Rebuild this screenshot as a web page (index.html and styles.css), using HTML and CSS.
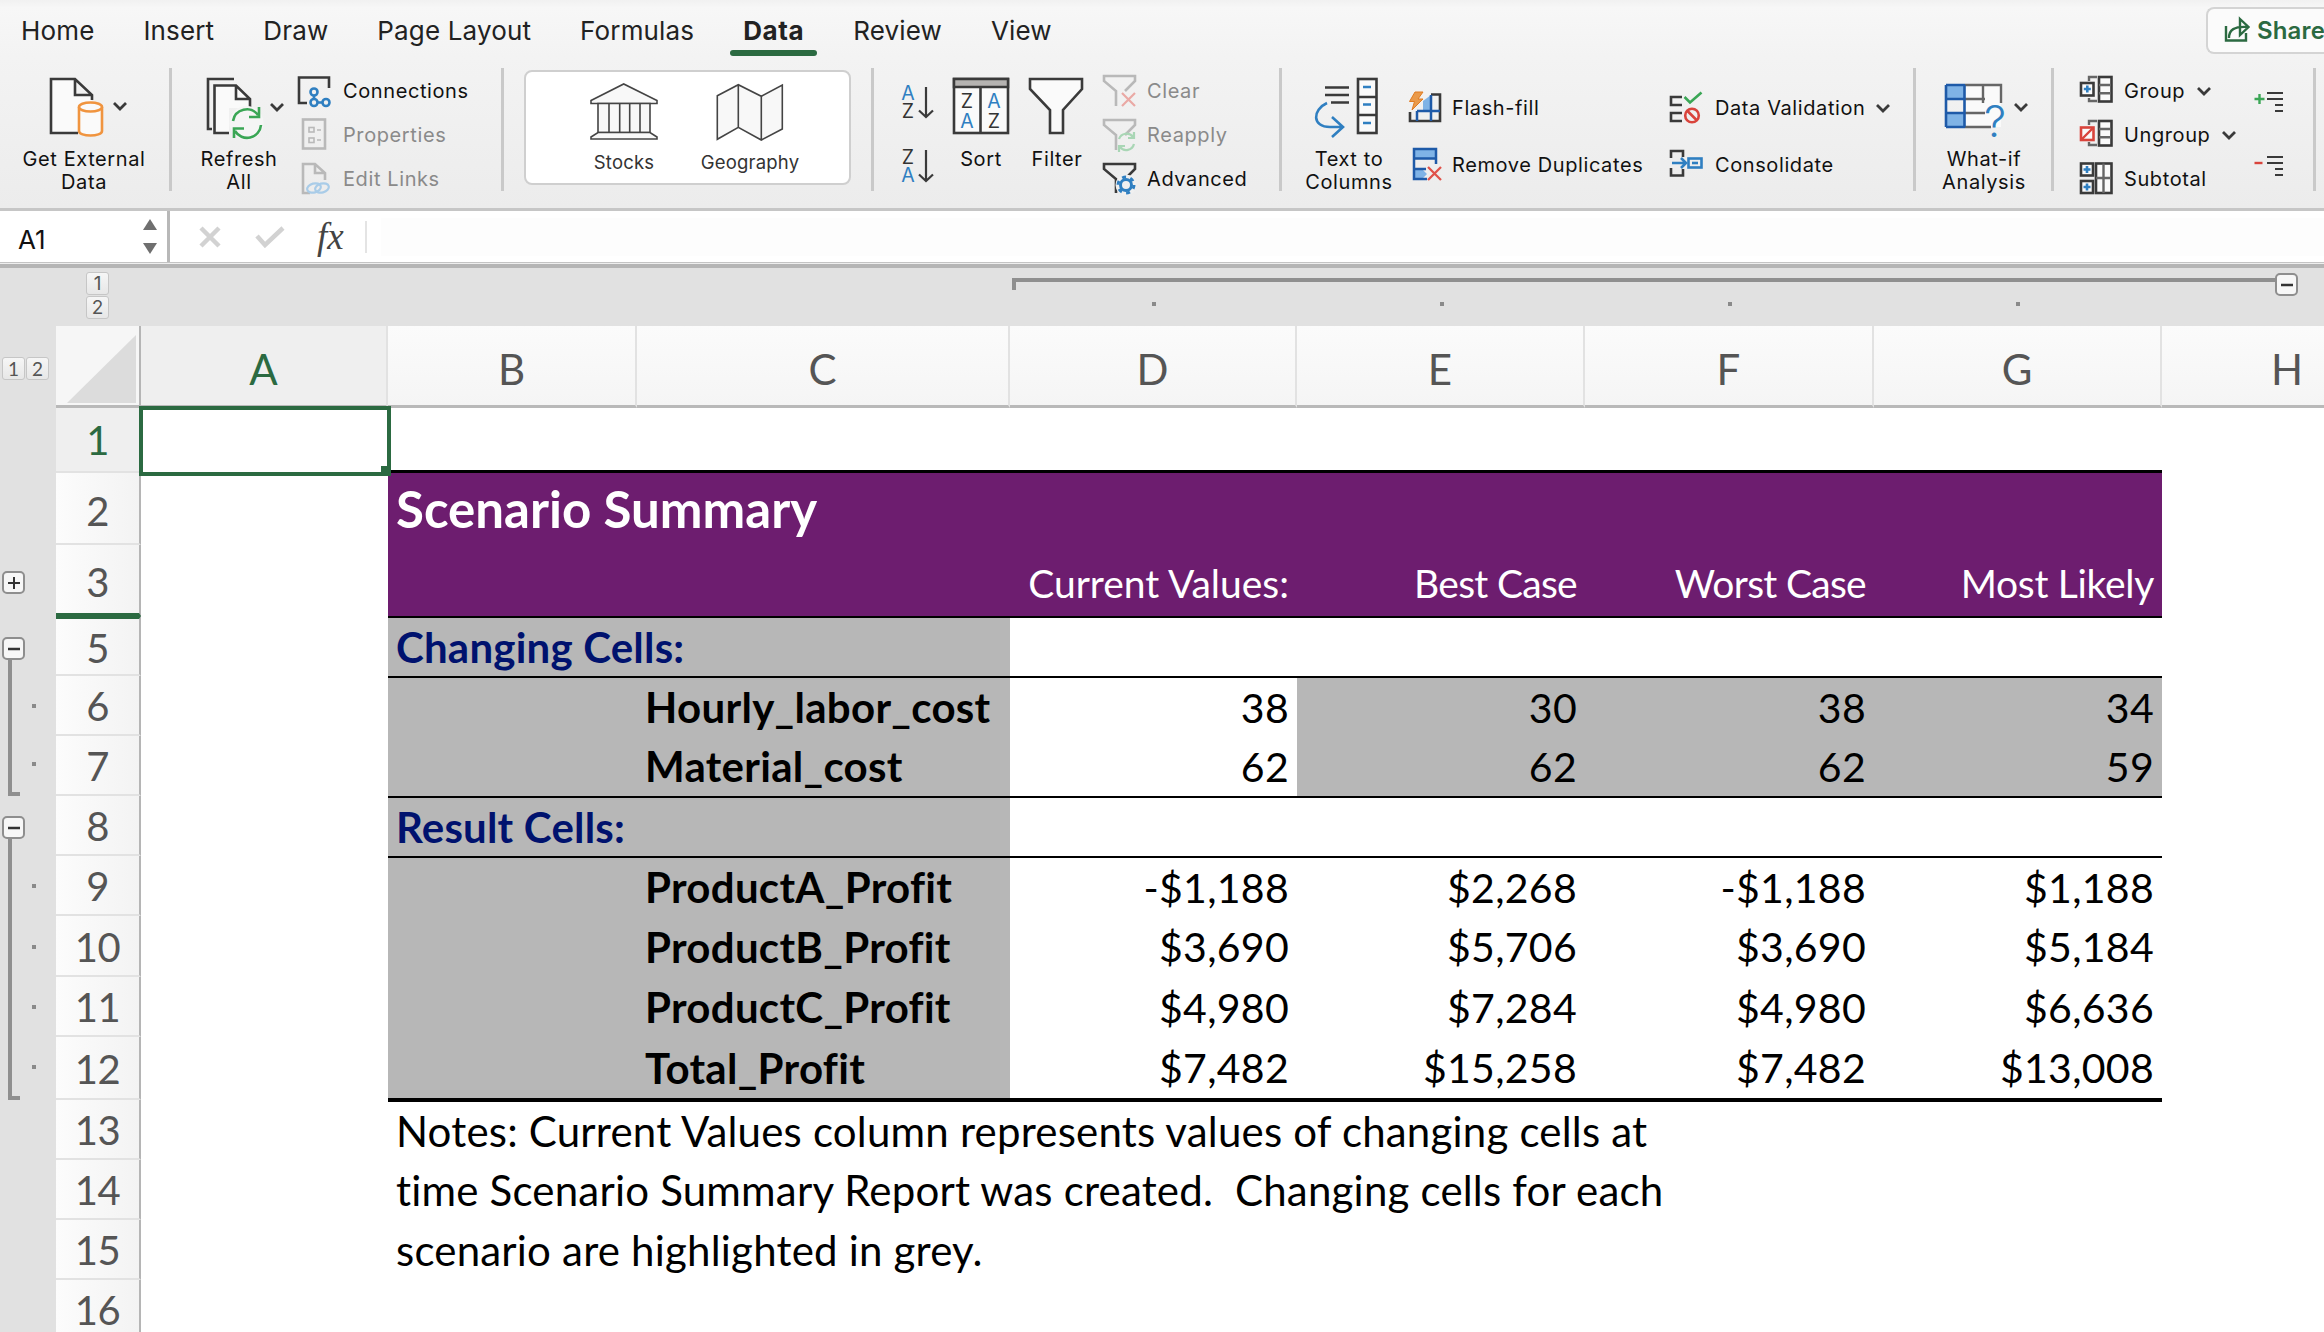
FILE: index.html
```html
<!DOCTYPE html>
<html lang="en">
<head>
<meta charset="utf-8">
<title>Scenario Summary</title>
<link rel="stylesheet" href="styles.css">
</head>
<body>
<div class="app">
  <nav class="tabs">
    <span class="tab">Home</span><span class="tab">Insert</span><span class="tab">Draw</span><span class="tab">Page Layout</span><span class="tab">Formulas</span><span class="tab active">Data</span><span class="tab">Review</span><span class="tab">View</span>
    <div class="share">
      <svg class="share-icon" viewBox="2220 18 30 30"><path class="st-green" d="M2224 29 V43.5 H2244 V36"/><path class="st-green" d="M2227 41 C2227 33 2232 29 2246 30 M2238 22 L2246.5 30 L2238 38 Z"/></svg>
      <span>Share</span>
    </div>
  </nav>

  <section class="ribbon">
    <div class="group g1">
      <div class="big w168">
        <svg class="bi" width="104" height="68" viewBox="32 72 104 68"><path class="st" d="M78 133 H51 V79 H75 L92 95 V100 M75 79 V95 H92" fill="#fafafa"/><path d="M79 107 V131 C79 137 102 137 102 131 V107" fill="#fafafa" stroke="#f0943f" stroke-width="2.6"/><ellipse cx="90.5" cy="107" rx="11.5" ry="4.5" fill="#fafafa" stroke="#f0943f" stroke-width="2.6"/><path class="chev" d="M114 103 L120 109 L126 103"/></svg>
        <span class="lbl">Get External<br>Data</span>
      </div>
    </div>

    <div class="group g2">
      <div class="big w130">
        <svg class="bi" width="130" height="68" viewBox="173 72 130 68"><path class="st" d="M233 79 H207 V129 H211"/><path fill="#fafafa" d="M228 133 H213.5 V85.5 H235 L249 99 V108 H228 Z"/><path class="st" d="M228 133 H213.5 V85.5 H235 L249 99 V108 M235 86 V99 H249"/><circle cx="245.5" cy="123" r="17" fill="#f5f5f5"/><path class="st-g" d="M232 121 A14 14 0 0 1 257 115 M258 107 V117 H248 M260 125 A14 14 0 0 1 234 131 M233 138 V128.500 H243"/><path class="chev" d="M270 104 L276 110 L282 104"/></svg>
        <span class="lbl">Refresh<br>All</span>
      </div>
      <div class="rows">
        <div class="row"><svg width="40" height="40" viewBox="296 71 40 40"><path class="st" d="M307 103 H299 V77.500 H329 V88"/><circle cx="314" cy="92" r="3.500" class="st-b"/><circle cx="314" cy="102.500" r="3.500" class="st-b"/><circle cx="326" cy="102.500" r="3.500" class="st-b"/><path class="st-b" d="M314 95.500 V99 M317.500 102.500 H322.500"/></svg><span>Connections</span></div>
        <div class="row off"><svg width="40" height="40" viewBox="296 115 40 40"><rect x="303" y="119.500" width="22" height="29" class="st-o"/><rect x="309" y="127.500" width="5" height="4.500" class="st-thin"/><rect x="309" y="138" width="5" height="4.500" class="st-thin"/><path class="st-thin" d="M317 130 H321 M317 140 H321"/></svg><span>Properties</span></div>
        <div class="row off"><svg width="40" height="40" viewBox="296 159 40 40"><path class="st-o" d="M310 193 H303 V164 H315 L325 173 V180 M315 164 V173 H325"/><ellipse cx="314" cy="188" rx="7" ry="4.500" transform="rotate(-15 314 188)" fill="none" stroke="#a9cce8" stroke-width="2.200"/><ellipse cx="322" cy="188" rx="7" ry="4.500" transform="rotate(-15 322 188)" fill="none" stroke="#a9cce8" stroke-width="2.200"/></svg><span>Edit Links</span></div>
      </div>
    </div>

    <div class="group g3">
      <div class="types">
        <div class="type">
          <svg width="74" height="64" viewBox="586 80 74 64"><path class="st-t" fill="#f8f8f8" d="M590 100.500 L622.700 84 L656 100.500 V103.500 H590 Z"/><path class="st-t" fill="#f8f8f8" d="M597 103.500 H649 V132.500 H597 Z M608 103.500 V132.500 M618.700 103.500 V132.500 M628.700 103.500 V132.500 M639 103.500 V132.500"/><path class="st-t" fill="#f8f8f8" d="M597 132.500 H649 L656 137 V139 H590 V137 Z"/></svg>
          <span>Stocks</span>
        </div>
        <div class="type">
          <svg width="74" height="64" viewBox="712 80 74 64"><path class="st-t" fill="#f8f8f8" d="M716.300 95.700 L737.300 84.700 L760.300 96.300 L781.300 85 V129 L760.300 140 L737.300 127.300 L716.300 139.300 Z M737.300 84.700 V127.300 M760.300 96.300 V140"/></svg>
          <span>Geography</span>
        </div>
      </div>
    </div>

    <div class="group g4">
      <div class="sorts">
        <svg width="40" height="40" viewBox="897 82 40 40"><text class="ltr blue" x="908" y="100">A</text><text class="ltr dark" x="908" y="118">Z</text><path class="st-a" d="M926 87 V117 M919 110.500 L926 117 L933 110.500"/></svg>
        <svg width="40" height="40" viewBox="897 146 40 40"><text class="ltr dark" x="908" y="164">Z</text><text class="ltr blue" x="908" y="182">A</text><path class="st-a" d="M926 150 V181 M919 174.500 L926 181 L933 174.500"/></svg>
      </div>
      <div class="big w64 ml-sort">
        <svg class="bi" width="64" height="68" viewBox="949 72 64 68"><rect x="954" y="79" width="54" height="54" class="st" fill="#fafafa"/><rect x="954" y="79" width="54" height="8" fill="#b5b3b1" stroke="#3a3a3a" stroke-width="2.500"/><path class="st" d="M980.500 87 V133"/><text class="ltr dark" x="967" y="107.500">Z</text><text class="ltr blue" x="967" y="128">A</text><text class="ltr blue" x="994" y="107.500">A</text><text class="ltr dark" x="994" y="128">Z</text></svg>
        <span class="lbl">Sort</span>
      </div>
      <div class="big w64 ml-filter">
        <svg class="bi" width="64" height="68" viewBox="1025 72 64 68"><path class="st" fill="#fafafa" d="M1030 79 H1082 V89 L1063 110 V133 H1050 V110 L1030 89 Z"/></svg>
        <span class="lbl">Filter</span>
      </div>
      <div class="rows ml-clear">
        <div class="row off"><svg width="40" height="40" viewBox="1100 71 40 40"><path class="st-o" d="M1116 106 V91 L1104 81 V76 H1135 V81 L1125 91"/><path d="M1122 93 L1135 106 M1135 93 L1122 106" stroke="#eaa9a5" stroke-width="2.200" fill="none"/></svg><span>Clear</span></div>
        <div class="row off"><svg width="40" height="40" viewBox="1100 115 40 40"><path class="st-o" d="M1116 150 V135 L1104 125 V120 H1135 V125 L1125 135"/><path d="M1119 139 A8 8 0 0 1 1133 137 M1134 132 V138 H1128 M1134 144 A8 8 0 0 1 1120 147 M1119 152 V146 H1125" stroke="#a9d6b5" stroke-width="2.200" fill="none"/></svg><span>Reapply</span></div>
        <div class="row"><svg width="40" height="40" viewBox="1100 159 40 40"><path class="st" d="M1116 193 V179 L1104 169 V164 H1135 V169 L1125 179"/><circle cx="1126" cy="185" r="10.500" fill="#f0f0f0"/><circle cx="1126" cy="185" r="5.500" fill="none" stroke="#2f7fc1" stroke-width="3"/><circle cx="1126" cy="185" r="8" fill="none" stroke="#2f7fc1" stroke-width="3" stroke-dasharray="4 4.380"/></svg><span>Advanced</span></div>
      </div>
    </div>

    <div class="group g5">
      <div class="big w96 ml-ttc">
        <svg class="bi" width="80" height="68" viewBox="1309 72 80 68"><path class="st" d="M1325 87.500 H1349 M1325 95 H1349 M1331 102.500 H1349"/><rect x="1358" y="79" width="18.500" height="54" class="st" fill="#fafafa"/><path class="st" d="M1358 97 H1376 M1358 115 H1376"/><path class="st-b" d="M1363 87 H1371 M1363 104.500 H1371 M1363 123 H1371 M1327 103 C1312 110 1312 127 1330 127 H1342 M1332 117 L1343 127 L1332 137"/></svg>
        <span class="lbl">Text to<br>Columns</span>
      </div>
      <div class="pairs ml-pair1">
        <div class="row"><svg width="40" height="40" viewBox="1405 88 40 40"><path fill="#7fb3e6" d="M1423 101 L1431 95 V110 H1423 Z"/><path class="st" d="M1431 94.500 H1440 V121 H1410 V112"/><path d="M1431 95 V121 M1417 111 V121 M1417 111 H1440" stroke="#1e5aa8" stroke-width="2.500" fill="none"/><path fill="#ea9a4a" stroke="#e07b20" stroke-width="1" d="M1415 92 H1423 L1418 99 H1423 L1412 110 L1414.500 101.500 H1409.500 Z"/></svg><span>Flash-fill</span></div>
        <div class="row"><svg width="40" height="40" viewBox="1405 145 40 40"><path fill="#7fb3e6" d="M1414 149 H1436 V158 H1414 Z M1414 169 H1422 L1427 174 L1422 179 H1414 Z"/><path d="M1427 179 H1414 V149 H1436 V164 M1414 158.500 H1436 M1414 169 H1426" fill="none" stroke="#1e5aa8" stroke-width="2.500"/><path d="M1428 167 L1441 180 M1441 167 L1428 180" stroke="#e0524a" stroke-width="2.300" fill="none"/></svg><span>Remove Duplicates</span></div>
      </div>
      <div class="pairs ml-pair2">
        <div class="row"><svg width="40" height="40" viewBox="1666 88 40 40"><path class="st" d="M1682 97 H1671 V105 H1682 M1682 113 H1671 V121 H1682"/><path class="st-g" d="M1684.500 97 L1690 102.500 L1701.500 92.500"/><circle cx="1692" cy="115.500" r="6.800" fill="#f0f0f0" stroke="#d9443c" stroke-width="2.600"/><path d="M1687.500 111 L1696.500 120" stroke="#d9443c" stroke-width="2.600"/></svg><span>Data Validation</span><svg class="cv cv-dv" width="14" height="10" viewBox="0 0 14 10"><path class="chev" d="M1 2 L7 8 L13 2"/></svg></div>
        <div class="row"><svg width="40" height="40" viewBox="1666 145 40 40"><path class="st" d="M1683 157 V151 H1671 V158 M1671 168 V175.500 H1683 V169"/><path class="st-b" d="M1672 163 H1686 M1681 158 L1686 163 L1681 168"/><rect x="1688.500" y="158.500" width="13" height="9" class="st-b"/><path class="st-b" d="M1692 163 H1698"/></svg><span>Consolidate</span></div>
      </div>
    </div>

    <div class="group g6">
      <div class="big w88 ml-what">
        <svg class="bi" width="88" height="68" viewBox="1939 72 88 68"><rect x="1945" y="85" width="19" height="14" fill="#7fb3e6"/><rect x="1945" y="113" width="19" height="14" fill="#7fb3e6"/><rect x="1964" y="85" width="36" height="42" fill="#fafafa"/><path class="st-m" d="M1964 85 H2000 V103 M1964 99 H1984 M1964 113 H1984 M1982 85 V103 M1964 127 H1990"/><path d="M1963.500 85 V127 M1945 99 H1964 M1945 113 H1964 M1945 85 H1964 M1945 127 H1964 M1945 85 V127" fill="none" stroke="#1e5aa8" stroke-width="2.600"/><text class="qm" x="1994" y="137">?</text><path class="chev" d="M2014 104 L2020 110 L2026 104"/></svg>
        <span class="lbl">What-if<br>Analysis</span>
      </div>
    </div>

    <div class="group g7">
      <div class="rows">
        <div class="row row-o"><svg width="40" height="40" viewBox="2076 71 40 40"><rect x="2081" y="83" width="12.500" height="12.500" class="st" fill="#fafafa"/><path class="st-b" d="M2087.300 85.500 V92.500 M2083.800 89 H2090.800"/><path class="st-m" d="M2097 77 H2089 V81 M2097 101 H2089 V98"/><rect x="2099" y="77" width="12.500" height="24.500" class="st" fill="#fafafa"/><path class="st-m" d="M2099 85 H2111 M2099 93.300 H2111"/></svg><span>Group</span><svg class="cv" width="14" height="10" viewBox="0 0 14 10"><path class="chev" d="M1 2 L7 8 L13 2"/></svg></div>
        <div class="row row-o"><svg width="40" height="40" viewBox="2076 115 40 40"><rect x="2081" y="127.500" width="12.500" height="12.500" fill="#fafafa" stroke="#d9443c" stroke-width="2.600"/><path d="M2082 139 L2093 128" stroke="#d9443c" stroke-width="2.400"/><path class="st-m" d="M2097 121 H2089 V125 M2097 145 H2089 V142"/><rect x="2099" y="121" width="12.500" height="24.500" class="st" fill="#fafafa"/><path class="st-m" d="M2099 129 H2111 M2099 137.300 H2111"/></svg><span>Ungroup</span><svg class="cv" width="14" height="10" viewBox="0 0 14 10"><path class="chev" d="M1 2 L7 8 L13 2"/></svg></div>
        <div class="row row-o"><svg width="40" height="40" viewBox="2076 159 40 40"><rect x="2081" y="163.500" width="12" height="12" class="st" fill="#fafafa"/><rect x="2081" y="181" width="12" height="12" class="st" fill="#fafafa"/><path class="st-b" d="M2087 166 V173 M2083.500 169.500 H2090.500 M2087 183.500 V190.500 M2083.500 187 H2090.500"/><rect x="2096" y="163.500" width="15.500" height="29.500" class="st" fill="#fafafa"/><path class="st-m" d="M2103.500 163.500 V193 M2096 178 H2111"/></svg><span>Subtotal</span></div>
      </div>
      <div class="indents">
        <svg width="40" height="40" viewBox="2250 88 40 40"><path d="M2254.500 99 H2264.500 M2259.500 94 V104" stroke="#3aa655" stroke-width="2.400" fill="none"/><path class="st-i" d="M2267 93 H2283 M2267 99 H2283 M2275 105 H2283 M2275 111 H2283"/></svg>
        <svg width="40" height="40" viewBox="2250 152 40 40"><path d="M2254.500 163 H2262.500" stroke="#d9443c" stroke-width="2.400" fill="none"/><path class="st-i" d="M2267 157 H2283 M2267 163 H2283 M2275 169 H2283 M2275 175 H2283"/></svg>
      </div>
    </div>
  </section>

  <section class="fbar">
    <div class="namebox">
      <span class="nametext">A1</span>
      <svg width="16" height="36" viewBox="0 0 16 36"><path d="M8 0 L15 11 H1 Z" fill="#6f6f6f"/><path d="M8 35 L15 24 H1 Z" fill="#6f6f6f"/></svg>
    </div>
    <div class="fbtns">
      <svg width="22" height="22" viewBox="0 0 22 22"><path d="M2 2 L20 20 M20 2 L2 20" stroke="#d2d2d2" stroke-width="4.500" fill="none"/></svg>
      <svg width="30" height="22" viewBox="0 0 30 22"><path d="M2 10 L10 19 L28 2" stroke="#d2d2d2" stroke-width="4.500" fill="none"/></svg>
      <span class="fx">fx</span>
    </div>
    <div class="finput"></div>
  </section>
  <div class="fline"></div>

  <div class="coltop">
    <div class="lvls-col">
      <span class="lvl">1</span><span class="lvl">2</span>
    </div>
    <div class="colgroup">
      <div class="cg-bar"></div>
      <span class="obtn top-minus"><svg width="14" height="4" viewBox="0 0 14 4"><path d="M1 2 H13" stroke="#333" stroke-width="2.500"/></svg></span>
      <div class="cg-dots"><i class="dot d1"></i><i class="dot d2"></i><i class="dot d3"></i><i class="dot d4"></i></div>
    </div>
  </div>

  <main class="sheet">
    <!-- header -->
    <div class="gut lvl-row"><span class="lvl">1</span><span class="lvl">2</span></div>
    <div class="corner"><svg width="72" height="70" viewBox="0 0 72 70"><path d="M1 69 L70 1 V69 Z" fill="#dcdcdc"/></svg></div>
    <div class="ch sel">A</div><div class="ch">B</div><div class="ch">C</div><div class="ch">D</div><div class="ch">E</div><div class="ch">F</div><div class="ch">G</div><div class="ch">H</div>

    <!-- row 1 -->
    <div class="gut"></div><div class="rh rh-sel">1</div>
    <div class="c cur"><i class="handle"></i></div>
    <div class="c tb"></div><div class="c tb"></div><div class="c tb"></div><div class="c tb"></div><div class="c tb"></div><div class="c tb"></div>

    <!-- row 2 -->
    <div class="gut"></div><div class="rh rh-tall">2</div><div class="c"></div>
    <div class="c purple title span6">Scenario Summary</div>

    <!-- row 3 -->
    <div class="gut gut-plus"><span class="obtn"><svg width="14" height="14" viewBox="0 0 14 14"><path d="M1 7 H13 M7 1 V13" stroke="#333" stroke-width="2"/></svg></span></div><div class="rh rh-tall rh-hid">3</div><div class="c"></div>
    <div class="c purple span2"></div>
    <div class="c purple hd hd-wide">Current Values:</div><div class="c purple hd">Best Case</div><div class="c purple hd">Worst Case</div><div class="c purple hd hd-mid">Most Likely</div>

    <!-- row 5 -->
    <div class="gut gut-minus"><span class="obtn"><svg width="14" height="4" viewBox="0 0 14 4"><path d="M1 2 H13" stroke="#333" stroke-width="2.500"/></svg></span><i class="vline"></i></div><div class="rh rh-after">5</div><div class="c"></div>
    <div class="c grey section span2 bt">Changing Cells:</div>
    <div class="c bt"></div><div class="c bt"></div><div class="c bt"></div><div class="c bt"></div>

    <!-- row 6 -->
    <div class="gut gut-line"><i class="dot"></i></div><div class="rh">6</div><div class="c"></div>
    <div class="c grey bt"></div><div class="c grey name bt">Hourly_labor_cost</div>
    <div class="c num bt">38</div><div class="c grey num bt">30</div><div class="c grey num bt">38</div><div class="c grey num bt">34</div>

    <!-- row 7 -->
    <div class="gut gut-line gut-end"><i class="dot"></i></div><div class="rh">7</div><div class="c"></div>
    <div class="c grey"></div><div class="c grey name">Material_cost</div>
    <div class="c num">62</div><div class="c grey num">62</div><div class="c grey num">62</div><div class="c grey num">59</div>

    <!-- row 8 -->
    <div class="gut gut-minus gut-minus8"><span class="obtn"><svg width="14" height="4" viewBox="0 0 14 4"><path d="M1 2 H13" stroke="#333" stroke-width="2.500"/></svg></span><i class="vline"></i></div><div class="rh">8</div><div class="c"></div>
    <div class="c grey section span2 bt">Result Cells:</div>
    <div class="c bt"></div><div class="c bt"></div><div class="c bt"></div><div class="c bt"></div>

    <!-- row 9 -->
    <div class="gut gut-line"><i class="dot"></i></div><div class="rh">9</div><div class="c"></div>
    <div class="c grey bt"></div><div class="c grey name bt">ProductA_Profit</div>
    <div class="c num bt">-$1,188</div><div class="c num bt">$2,268</div><div class="c num bt">-$1,188</div><div class="c num bt">$1,188</div>

    <!-- row 10 -->
    <div class="gut gut-line"><i class="dot"></i></div><div class="rh">10</div><div class="c"></div>
    <div class="c grey"></div><div class="c grey name">ProductB_Profit</div>
    <div class="c num">$3,690</div><div class="c num">$5,706</div><div class="c num">$3,690</div><div class="c num">$5,184</div>

    <!-- row 11 -->
    <div class="gut gut-line"><i class="dot"></i></div><div class="rh">11</div><div class="c"></div>
    <div class="c grey"></div><div class="c grey name">ProductC_Profit</div>
    <div class="c num">$4,980</div><div class="c num">$7,284</div><div class="c num">$4,980</div><div class="c num">$6,636</div>

    <!-- row 12 -->
    <div class="gut gut-line gut-end"><i class="dot"></i></div><div class="rh">12</div><div class="c"></div>
    <div class="c grey bb"></div><div class="c grey name bb">Total_Profit</div>
    <div class="c num bb">$7,482</div><div class="c num bb">$15,258</div><div class="c num bb">$7,482</div><div class="c num bb">$13,008</div>

    <!-- notes -->
    <div class="gut"></div><div class="rh">13</div><div class="c"></div>
    <div class="c note span6 bt">Notes: Current Values column represents values of changing cells at</div>
    <div class="gut"></div><div class="rh">14</div><div class="c"></div>
    <div class="c note span6">time Scenario Summary Report was created.&nbsp; Changing cells for each</div>
    <div class="gut"></div><div class="rh">15</div><div class="c"></div>
    <div class="c note span6">scenario are highlighted in grey.</div>
    <div class="gut"></div><div class="rh">16</div>
  </main>
</div>
</body>
</html>
```
FILE: styles.css
```css
* { box-sizing: border-box; }
html, body { margin: 0; padding: 0; width: 2324px; height: 1332px; overflow: hidden; background: #fff; }
body { font-family: Inter, "Liberation Sans", sans-serif; color: #111; }
svg { display: block; flex-shrink: 0; }

.app { width: 2324px; height: 1332px; display: flex; flex-direction: column; overflow: hidden; }

/* tabs */
.tabs {
  height: 56px; display: flex; align-items: center; gap: 49px; padding-left: 21px; flex-shrink: 0;
  background: linear-gradient(#f1f1f1, #f7f7f7 14%, #f3f3f3);
  font-size: 26px; color: #222; letter-spacing: .15px;
}
.tab { position: relative; height: 56px; line-height: 61px; white-space: nowrap; }
.tab.active { font-weight: 700; letter-spacing: .6px; }
.tab.active::after {
  content: ""; position: absolute; left: -13px; right: -13px; bottom: 0; height: 6px;
  border-radius: 3px; background: #2b6a41;
}
.share {
  margin-left: auto; margin-top: 4px; width: 118px; height: 47px; display: flex; align-items: center; gap: 5px; padding-left: 14px;
  background: #fbfbfb; border: 2px solid #d4d4d4; border-right: 0; border-radius: 8px 0 0 8px;
  color: #2b6a41; font-weight: 600; font-size: 24px; white-space: nowrap; overflow: hidden;
}
.share-icon { width: 30px; height: 30px; }
.st-green { fill: none; stroke: #2b6a41; stroke-width: 2.4; }

/* ribbon */
.ribbon {
  height: 155px; display: flex; padding-top: 12px; flex-shrink: 0;
  background: linear-gradient(#f3f3f3, #ececec);
  border-bottom: 3px solid #c6c6c6;
}
.group { height: 123px; border-right: 3px solid #c9c9c9; display: flex; flex-shrink: 0; }
.g1 { width: 172px; }
.g2 { width: 332px; }
.g3 { width: 370px; }
.g4 { width: 408px; }
.g5 { width: 634px; }
.g6 { width: 138px; }
.g7 { width: 262px; }

.big { display: flex; flex-direction: column; align-items: center; padding-top: 4px; font-size: 20px; flex-shrink: 0; }
.bi { margin-bottom: 8px; overflow: visible; }
.lbl { text-align: center; line-height: 23px; white-space: nowrap; letter-spacing: .6px; }
.w168 { width: 168px; }
.w130 { width: 130px; }
.w64 { width: 64px; }
.w96 { width: 96px; }
.w88 { width: 88px; }

.rows { display: flex; flex-direction: column; padding-top: 1px; flex-shrink: 0; }
.row { height: 44px; display: flex; align-items: center; gap: 7px; font-size: 20px; white-space: nowrap; letter-spacing: .6px; flex-shrink: 0; }
.row.off { color: #8a8a8a; }
.row-o { gap: 8px; }
.cv { margin-left: 4px; }
.cv-dv { margin-left: 1px; }
.g2 .big { margin: 0 -8px 0 2px; }

/* data types */
.types {
  margin: 2px 0 0 20px; width: 327px; height: 115px; display: flex; padding: 8px 0 0 35px;
  background: #fff; border: 2px solid #cfcfcf; border-radius: 8px;
}
.type { width: 126px; display: flex; flex-direction: column; align-items: center; gap: 6px; font-size: 18.500px; color: #333; line-height: 24px; letter-spacing: .2px; }

/* sort & filter */
.sorts { display: flex; flex-direction: column; gap: 24px; padding: 14px 0 0 23px; width: 64px; flex-shrink: 0; }
.ml-sort { margin-left: 11px; }
.ml-filter { margin-left: 12px; }
.ml-clear { margin-left: 11px; }
.ltr { font-family: Inter, sans-serif; font-size: 19.500px; text-anchor: middle; }
.blue { fill: #2f7fc1; }
.dark { fill: #333; }
.st-a { fill: none; stroke: #3a3a3a; stroke-width: 2.2; }
.st { stroke: #3a3a3a; stroke-width: 2.6; fill: none; }
.st[fill] { fill: #fafafa; }
.st-g { stroke: #3aa655; stroke-width: 2.6; fill: none; }
.st-b { stroke: #2f7fc1; stroke-width: 2.6; fill: none; }
.st-o { stroke: #b9b9b9; stroke-width: 2.6; fill: none; }
.st-thin { stroke: #b9b9b9; stroke-width: 1.6; fill: none; }
.st-t { stroke: #444; stroke-width: 1.6; }
.st-m { stroke: #666; stroke-width: 2.4; fill: none; }
.st-i { stroke: #3a3a3a; stroke-width: 2.2; fill: none; }
.chev { fill: none; stroke: #3a3a3a; stroke-width: 2.8; }
.qm { font-family: Inter, sans-serif; font-size: 44px; font-weight: 300; text-anchor: middle; fill: #2f7fc1; }

/* data tools */
.ml-ttc { margin-left: 19px; }
.pairs { display: flex; flex-direction: column; padding-top: 18px; gap: 13px; flex-shrink: 0; }
.ml-pair1 { margin-left: 8px; width: 261px; }
.ml-pair2 .row { gap: 9px; }
.ml-what { margin-left: 24px; }

/* outline */
.g7 .rows { margin-left: 22px; }
.indents { margin-left: auto; margin-right: 23px; display: flex; flex-direction: column; gap: 24px; padding-top: 20px; }

/* formula bar */
.fbar { height: 51px; display: flex; background: #fff; flex-shrink: 0; }
.namebox {
  width: 170px; display: flex; align-items: center; justify-content: space-between;
  padding: 0 9px 0 18px; font-size: 26px; color: #111; border-right: 3px solid #b8b8b8;
}
.nametext { padding-top: 5px; }
.fbtns { width: 197px; display: flex; align-items: center; padding-left: 29px; gap: 34px; height: 32px; margin-top: 10px; border-right: 2px solid #e4e4e4; }
.fx { font-family: "Liberation Serif", serif; font-style: italic; font-size: 37px; color: #444; line-height: 32px; margin-left: -2px; }
.finput { flex: 1; margin: 7px 0 0 14px; height: 38px; background: #fdfdfd; }
.fline { height: 6px; flex-shrink: 0; background: linear-gradient(#c4c4c4 0 1px, #eeeeee 1px 2px, #b5b5b5 2px 100%); }

/* column outline */
.coltop { height: 58px; flex-shrink: 0; background: #e1e1e1; display: flex; }
.lvls-col { width: 86px; margin-left: 86px; padding-top: 4px; display: flex; flex-direction: column; gap: 1px; flex-shrink: 0; }
.lvl {
  width: 23px; height: 23px; display: flex; align-items: center; justify-content: center; flex-shrink: 0;
  background: linear-gradient(#f6f6f6, #e7e7e7); border: 1px solid #c6c6c6; border-radius: 3px;
  font-size: 19px; color: #555;
}
.colgroup { position: relative; flex: 1; margin-left: 840px; }
.cg-bar { margin-top: 10px; width: 1264px; height: 12px; border-top: 4px solid #8f8f8f; border-left: 4px solid #8f8f8f; }
.top-minus { position: absolute; left: 1263px; top: 5px; }
.cg-dots { position: relative; }
.cg-dots .dot { position: absolute; top: 12px; }
.d1 { left: 140px; } .d2 { left: 428px; } .d3 { left: 716px; } .d4 { left: 1004px; }
.dot { display: block; width: 4px; height: 4px; background: #8a8a8a; flex-shrink: 0; }
.obtn {
  display: flex; align-items: center; justify-content: center; width: 23px; height: 23px; flex-shrink: 0;
  background: #f7f7f7; border: 2px solid #8e8e8e; border-radius: 5px;
}

/* sheet */
.sheet {
  display: grid; flex: 1;
  grid-template-columns: 56px 85px 247px 249px 373px 287px 288px 289px 288px 252px;
  grid-template-rows: 82px 65px 72px 71px 60px 60px 60px 60px 60px 61px 60px 63px 60px 60px 60px 60px;
  background: linear-gradient(90deg, #e1e1e1 56px, #fff 56px);
  font-family: Lato, "Noto Sans", sans-serif; color: #000;
}
.gut { grid-column: 1; background: #e1e1e1; min-width: 0; }
.lvl-row { display: flex; gap: 1px; padding: 31px 0 0 2px; }
.corner { background: #f6f6f6; border-right: 2px solid #b5b5b5; border-bottom: 3px solid #b9b9b9; padding: 8px 0 0 10px; }
.ch {
  display: flex; align-items: center; justify-content: center; padding-top: 6px;
  background: linear-gradient(#fbfbfb, #f5f5f5); border-right: 2px solid #e2e2e2; border-bottom: 3px solid #b9b9b9;
  font-size: 42px; color: #555;
}
.ch.sel { background: #efefef; color: #2b6a41; }
.rh {
  display: flex; align-items: center; justify-content: center; padding-top: 2px;
  background: linear-gradient(90deg, #fcfcfc, #f3f3f3); border-right: 2px solid #b5b5b5; border-bottom: 2px solid #e2e2e2;
  font-size: 40px; color: #555; letter-spacing: -.5px;
}
.rh-tall { padding-top: 5px; }
.rh-sel { background: #efefef; color: #2b6a41; padding-top: 0; }
.rh-hid { border-bottom: 3px solid #2b6a41; }
.rh-after { border-top: 3px solid #2b6a41; }

.c { min-width: 0; display: flex; align-items: center; white-space: nowrap; font-size: 42px; letter-spacing: .2px; }
.cur { position: relative; margin: -2px -3px -3px -2px; border: 4px solid #2b6a41; z-index: 2; }
.handle { position: absolute; right: -4px; bottom: -4px; width: 10px; height: 10px; background: #2b6a41; }
.tb { border-bottom: 3px solid #000; }
.purple { background: #6d1d6f; color: #fff; }
.title { font-weight: 700; font-size: 51px; letter-spacing: 0; padding: 0 8px 2px; }
.hd { justify-content: flex-end; align-items: flex-end; padding: 0 8px 10px 0; font-size: 39px; letter-spacing: -.7px; }
.hd-wide { letter-spacing: 0; }
.hd-mid { letter-spacing: -.3px; }
.span2 { grid-column: span 2; }
.span6 { grid-column: span 6; }
.grey { background: #b7b7b7; }
.bt { border-top: 2px solid #000; }
.bb { border-bottom: 2px solid #000; }
.section { font-weight: 700; color: #00126e; padding: 0 8px; }
.name { font-weight: 700; padding-left: 8px; letter-spacing: .3px; }
.num { justify-content: flex-end; padding-right: 8px; font-size: 41px; letter-spacing: .3px; }
.note { padding-left: 8px; }

/* row outline gutter */
.gut-plus { padding: 26px 0 0 2px; }
.gut-minus { display: flex; flex-direction: column; padding: 21px 0 0 2px; }
.gut-minus8 { padding-top: 20px; }
.vline { display: block; flex: 1; width: 4px; margin-left: 6px; background: #8f8f8f; }
.gut-line { display: flex; align-items: center; margin: 0 36px 0 8px; border-left: 4px solid #8f8f8f; background: transparent; }
.gut-line .dot { margin-left: 20px; }
.gut-end { border-bottom: 4px solid #8f8f8f; }
```
